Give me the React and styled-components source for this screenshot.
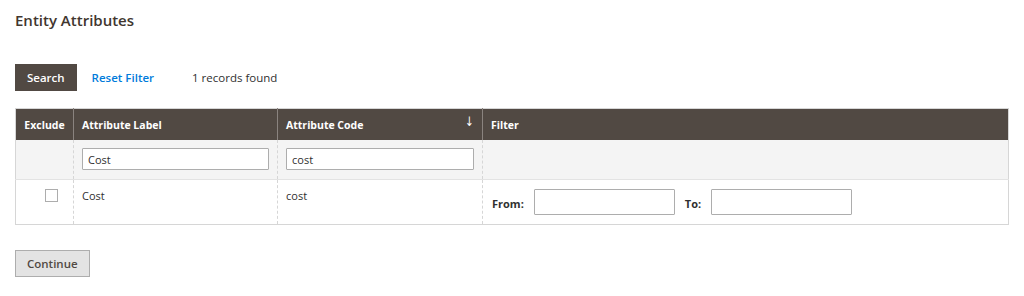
import styled, { createGlobalStyle } from 'styled-components';

const GlobalStyle = createGlobalStyle`
	body {
		margin: 0;
		background: #fff;
		font-family: "Open Sans", "Liberation Sans", sans-serif;
		color: #303030;
	}
`;

const Page = styled.div`
	padding: 10px 15px 0 15px;
	width: 994px;
`;

const Title = styled.h2`
	margin: 0;
	font-size: 15px;
	font-weight: 600;
	color: #41362f;
	line-height: 20px;
`;

const Actions = styled.div`
	display: flex;
	align-items: center;
	margin-top: 34px;
	height: 27px;
`;

const Button = styled.button`
	height: 27px;
	padding: 0 11px;
	font-family: inherit;
	font-size: 11.5px;
	font-weight: 600;
	border-radius: 0;
	cursor: pointer;
	background: ${(p) => (p.$primary ? '#514943' : '#e3e3e3')};
	color: ${(p) => (p.$primary ? '#fff' : '#514943')};
	border: 1px solid ${(p) => (p.$primary ? '#514943' : '#adadad')};
`;

const LinkButton = styled.a`
	margin-left: 15px;
	font-size: 11.5px;
	font-weight: 600;
	color: #007bdb;
	text-decoration: none;
`;

const Count = styled.span`
	margin-left: 38px;
	font-size: 11.5px;
	color: #303030;
`;

const Table = styled.table`
	margin-top: 17px;
	width: 994px;
	border-collapse: collapse;
	table-layout: fixed;
	border: 1px solid #d6d6d6;
`;

const Th = styled.th`
	position: relative;
	height: 31px;
	padding: 0 8px;
	background: #514943;
	color: #fff;
	font-size: 10.5px;
	font-weight: 700;
	text-align: ${(p) => (p.$center ? 'center' : 'left')};
	border-left: 1px solid #8a837f;
	&:first-child {
		border-left: none;
	}
`;

const SortArrow = styled.span`
	position: absolute;
	right: 7px;
	top: 5px;
	font-family: "DejaVu Sans", sans-serif;
	font-size: 13px;
	font-weight: 400;
	transform: scaleX(0.8);
`;

const FilterRow = styled.tr`
	background: #f4f4f4;
	border-bottom: 1px solid #e3e3e3;
`;

const Td = styled.td`
	padding: ${(p) => p.$pad || '8px'};
	font-size: 11px;
	color: #303030;
	vertical-align: top;
	text-align: left;
	border-left: 1px dashed #d6d6d6;
	&:first-child {
		border-left: none;
	}
`;

const TextInput = styled.input`
	box-sizing: border-box;
	width: ${(p) => p.$w || '100%'};
	height: ${(p) => p.$h || '22px'};
	padding: 0 5px;
	border: 1px solid #adadad;
	border-radius: 1px;
	font-family: inherit;
	font-size: 11px;
	color: #303030;
	background: #fff;
	outline: none;
	display: block;
`;

const Checkbox = styled.span`
	display: inline-block;
	width: 11px;
	height: 11px;
	border: 1px solid #adadad;
	background: #fff;
	margin-top: 1px;
	margin-left: 21px;
`;

const RangeWrap = styled.div`
	display: flex;
	align-items: center;
`;

const RangeLabel = styled.label`
	font-size: 11px;
	font-weight: 700;
	color: #303030;
	margin: ${(p) => p.$m || '0 10px 0 0'};
	padding-top: 2px;
`;

const Footer = styled.div`
	margin-top: 25px;
`;

const App = () => {
	return (
		<>
			<GlobalStyle />
			<Page>
				<Title>Entity Attributes</Title>
				<Actions>
					<Button $primary>Search</Button>
					<LinkButton href="#">Reset Filter</LinkButton>
					<Count>1 records found</Count>
				</Actions>
				<Table>
					<colgroup>
						<col style={{ width: 58 }} />
						<col style={{ width: 204 }} />
						<col style={{ width: 205 }} />
						<col />
					</colgroup>
					<thead>
						<tr>
							<Th $center>Exclude</Th>
							<Th>Attribute Label</Th>
							<Th>
								Attribute Code
								<SortArrow>↓</SortArrow>
							</Th>
							<Th>Filter</Th>
						</tr>
					</thead>
					<tbody>
						<FilterRow>
							<Td $pad="8px 8px 9px 8px"></Td>
							<Td $pad="8px 8px 9px 8px">
								<TextInput defaultValue="Cost" />
							</Td>
							<Td $pad="8px 8px 9px 8px">
								<TextInput defaultValue="cost" />
							</Td>
							<Td></Td>
						</FilterRow>
						<tr>
							<Td $pad="8px 8px 9px 8px">
								<Checkbox />
							</Td>
							<Td>Cost</Td>
							<Td>cost</Td>
							<Td $pad="9px 8px 9px 9px">
								<RangeWrap>
									<RangeLabel>From:</RangeLabel>
									<TextInput $w="141px" $h="26px" />
									<RangeLabel $m="0 10px 0 10px">To:</RangeLabel>
									<TextInput $w="141px" $h="26px" />
								</RangeWrap>
							</Td>
						</tr>
					</tbody>
				</Table>
				<Footer>
					<Button>Continue</Button>
				</Footer>
			</Page>
		</>
	);
};

export default App;
